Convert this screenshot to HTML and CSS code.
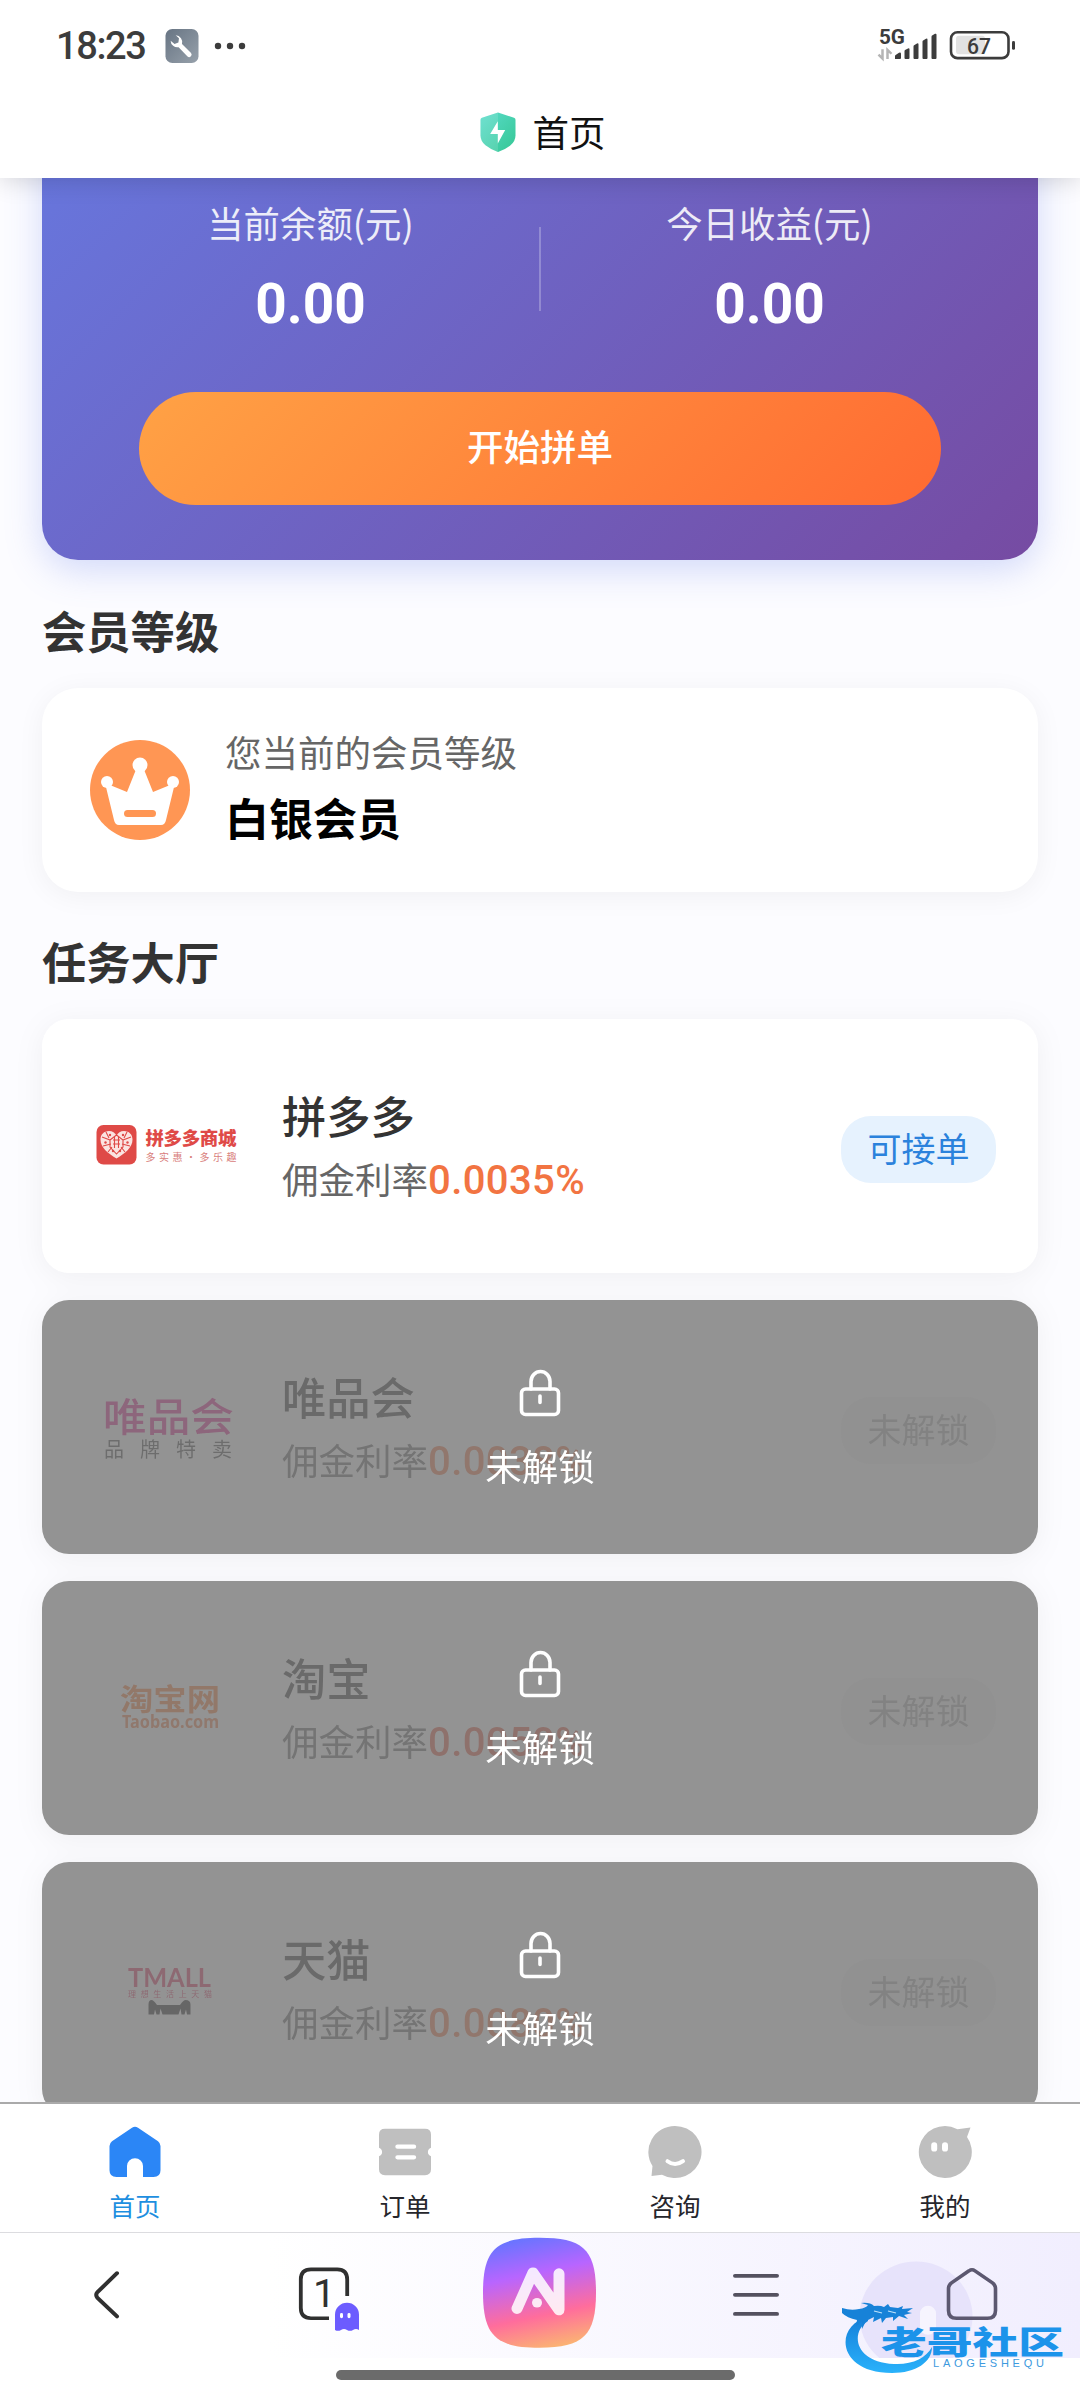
FILE: index.html
```html
<!DOCTYPE html>
<html lang="zh-CN">
<head>
<meta charset="utf-8">
<title>首页</title>
<link rel="stylesheet" href="styles.css">
</head>
<body>
<div class="screen">
  <header class="top">
    <div class="status">
      <span class="time">18:23</span>
      <svg class="tool" viewBox="0 0 34 35" width="34" height="34">
        <defs><linearGradient id="tg" x1="0" y1="0" x2="1" y2="1"><stop offset="0" stop-color="#677483"/><stop offset="1" stop-color="#97a1ab"/></linearGradient></defs>
        <rect width="34" height="35" rx="7" fill="url(#tg)"/>
        <path d="M10.500 6.500a7 7 0 0 1 6.500 9l9.300 9.200a2.600 2.600 0 0 1-3.600 3.700l-9.200-9.700a7 7 0 0 1-8.200-6.700l4 3.400 4-1.600.6-4.200z" fill="#fff"/>
      </svg>
      <svg class="dots" viewBox="0 0 32 8" width="32" height="8"><g fill="#3c3c3c"><circle cx="4" cy="4" r="3.200"/><circle cx="16" cy="4" r="3.200"/><circle cx="28" cy="4" r="3.200"/></g></svg>
      <svg class="signal" viewBox="878 28 140 36" width="140" height="35" preserveAspectRatio="none">
        <text x="879" y="45" class="net" textLength="26" lengthAdjust="spacingAndGlyphs">5G</text>
        <path d="M882.500 51v9.500l-4-4M887.500 61v-9.500l4 4" fill="none" stroke="#b5b5b5" stroke-width="2.500"/>
        <g fill="#3c3c3c">
          <path d="M895 61v-3q0-1 1-1.500l3-2q2-.6 2 1v4.500q0 1-1 1z"/>
          <path d="M904.500 60v-7q0-1 1-1.500l2.500-1.500q1.500-.6 1.500 1v9q0 1-1 1h-3q-1 0-1-1z"/>
          <path d="M913.500 60v-12q0-1 1-1.500l2.500-1.500q1.500-.6 1.500 1v14q0 1-1 1h-3q-1 0-1-1z"/>
          <path d="M922.500 60v-17q0-1 1-1.500l2.500-1.500q1.500-.6 1.500 1v19q0 1-1 1h-3q-1 0-1-1z"/>
          <path d="M931.500 60v-22q0-1 1-1.500l2.500-1.500q1.500-.6 1.500 1v24q0 1-1 1h-3q-1 0-1-1z"/>
        </g>
        <rect x="956" y="37" width="29" height="19" rx="3" fill="#e2e2e2"/>
        <rect x="951" y="33.500" width="57.500" height="26.500" rx="6.500" fill="none" stroke="#3c3c3c" stroke-width="2.600"/>
        <rect x="1012" y="42.500" width="3" height="9" rx="1.500" fill="#3c3c3c"/>
        <text x="967" y="55.500" class="level" textLength="24" lengthAdjust="spacingAndGlyphs">67</text>
      </svg>
    </div>
    <div class="title">
      <svg viewBox="0 0 36 42" width="36" height="40.500" preserveAspectRatio="none">
        <defs><linearGradient id="sh" x1="0" y1="0" x2="1" y2="1"><stop offset="0" stop-color="#5adccb"/><stop offset="1" stop-color="#35c794"/></linearGradient></defs>
        <path d="M18 0.500 34 6q1.500.6 1.500 2v16q0 6-5 10.500Q25 39 18 41.500 11 39 5.500 34.500.5 30 .5 24V8q0-1.400 1.500-2z" fill="url(#sh)"/>
        <path d="M18 .5V41.500Q11 39 5.500 34.500.5 30 .5 24V8q0-1.400 1.500-2z" fill="#fff" opacity=".13"/>
        <path d="M17.800 9.500v9.200h7.400l-7.400 14v-10h-7.600z" fill="#fff"/>
      </svg>
      <span>首页</span>
    </div>
  </header>

  <main class="page">
    <section class="hero">
      <div class="stats">
        <div class="stat"><span class="stat-label">当前余额(元)</span><span class="stat-value">0.00</span></div>
        <i class="divider"></i>
        <div class="stat"><span class="stat-label">今日收益(元)</span><span class="stat-value">0.00</span></div>
      </div>
      <div class="start">开始拼单</div>
    </section>

    <h2 class="heading first">会员等级</h2>
    <section class="member">
      <svg viewBox="0 0 102 102" width="102" height="102">
        <circle cx="51" cy="51" r="50" fill="#ff9654"/>
        <g fill="#fff"><circle cx="51" cy="26" r="7.500"/><circle cx="18" cy="43" r="6"/><circle cx="84" cy="43" r="6"/>
        <path d="M16 44 38 53 48 28h6l10 25 22-9-9 37q-1 5-5 5H30q-4 0-5-5z"/></g>
        <rect x="35" y="71" width="32" height="7" rx="3.500" fill="#ff9654"/>
      </svg>
      <div class="member-text"><span class="member-label">您当前的会员等级</span><span class="member-name">白银会员</span></div>
    </section>

    <h2 class="heading second">任务大厅</h2>
    <section class="tasks">
      <article class="task">
        <svg class="logo" viewBox="84 1096 170 100">
          <rect x="96.500" y="1125" width="40" height="39.500" rx="7" fill="#df4a47"/>
          <path d="M116.500 1158.500c-9-5.500-16-11-16-19 0-5 3.500-8.500 8.500-8.500 3.500 0 6 2 7.500 4.500 1.500-2.500 4-4.500 7.500-4.500 5 0 8.500 3.500 8.500 8.500 0 8-7 13.500-16 19z" fill="#fbe4e1"/>
          <g fill="none" stroke="#df4a47" stroke-width="1.100"><path d="M102 1137l8 3M106 1132l3 6M131 1137l-8 3M127 1132l-3 6M103 1146l8-2M130 1146l-8-2M108 1152l4-5M125 1152l-4-5"/><path d="M110 1140l6.500-5 6.500 5v7l-6.500 7-6.500-7z"/><path d="M113 1140h7M113 1144h7M114.500 1137v11M118.500 1137v11"/></g>
          <g fill="#df4a47"><circle cx="105.500" cy="1142.500" r="1.200"/><circle cx="127.500" cy="1142.500" r="1.200"/><circle cx="110" cy="1135" r="1.200"/><circle cx="123" cy="1135" r="1.200"/><circle cx="113" cy="1151" r="1.200"/><circle cx="120" cy="1151" r="1.200"/></g>
          <text x="145.500" y="1145" class="pdd" textLength="91">拼多多商城</text>
          <text x="145.500" y="1161" class="pdd-sub" textLength="91">多实惠·多乐趣</text>
        </svg>
        <div class="info"><span class="name">拼多多</span><span class="rate">佣金利率<b>0.0035%</b></span></div>
        <span class="tag">可接单</span>
      </article>

      <article class="task locked">
        <svg class="logo" viewBox="84 1377 170 100">
          <text x="103" y="1430.500" class="vip" textLength="131" lengthAdjust="spacingAndGlyphs">唯品会</text>
          <text x="104" y="1457" class="vip-sub" textLength="128">品牌特卖</text>
        </svg>
        <div class="info"><span class="name">唯品会</span><span class="rate">佣金利率<b>0.0038%</b></span></div>
        <span class="tag">未解锁</span>
        <div class="mask"><svg viewBox="0 0 42 48" width="42" height="48"><g fill="none" stroke="#fff" stroke-width="3.600" stroke-linecap="round"><rect x="2.500" y="20" width="37" height="25.500" rx="4"/><path d="M12 20v-7.500a9.500 10 0 0 1 19 0V20M21 27v6.500"/></g></svg><span>未解锁</span></div>
      </article>

      <article class="task locked">
        <svg class="logo" viewBox="84 1658 170 100">
          <text x="120" y="1710" class="tb" textLength="100" lengthAdjust="spacingAndGlyphs">淘宝网</text>
          <text x="122" y="1727.500" class="tb-sub" textLength="97" lengthAdjust="spacingAndGlyphs">Taobao.com</text>
        </svg>
        <div class="info"><span class="name">淘宝</span><span class="rate">佣金利率<b class="red">0.0050%</b></span></div>
        <span class="tag">未解锁</span>
        <div class="mask"><svg viewBox="0 0 42 48" width="42" height="48"><g fill="none" stroke="#fff" stroke-width="3.600" stroke-linecap="round"><rect x="2.500" y="20" width="37" height="25.500" rx="4"/><path d="M12 20v-7.500a9.500 10 0 0 1 19 0V20M21 27v6.500"/></g></svg><span>未解锁</span></div>
      </article>

      <article class="task locked">
        <svg class="logo" viewBox="84 1939 170 100">
          <text x="128" y="1986.500" class="tm" textLength="83" lengthAdjust="spacingAndGlyphs">TMALL</text>
          <text x="128" y="1996.500" class="tm-sub" textLength="84">理想生活上天猫</text>
          <path d="M148.500 2014.500v-10q0-4.500 3-4.500 2 0 5.500 5h23q3.500-5 5.500-5 5 0 5 4.500v10h-3.500l-1-5-1.500 5h-3l-1-6-2 6h-16l-2-6-1 6h-3l-1.500-5-1 5z" fill="#222"/>
        </svg>
        <div class="info"><span class="name">天猫</span><span class="rate">佣金利率<b>0.0080%</b></span></div>
        <span class="tag">未解锁</span>
        <div class="mask"><svg viewBox="0 0 42 48" width="42" height="48"><g fill="none" stroke="#fff" stroke-width="3.600" stroke-linecap="round"><rect x="2.500" y="20" width="37" height="25.500" rx="4"/><path d="M12 20v-7.500a9.500 10 0 0 1 19 0V20M21 27v6.500"/></g></svg><span>未解锁</span></div>
      </article>
    </section>
  </main>

  <nav class="tabs">
    <a class="tab active"><svg viewBox="0 0 56 56" width="56" height="54" preserveAspectRatio="none"><path d="M25 2.800q3-2 6 0l20 14q2.500 2 2.500 5V47q0 7-7 7H36V42.500a8 8 0 0 0-16 0V54H9.500q-7 0-7-7V21.800q0-3 2.500-5z" fill="#2b86f6"/></svg><span>首页</span></a>
    <a class="tab"><svg viewBox="0 0 56 56" width="56" height="54" preserveAspectRatio="none"><path d="M8 4h40q6 0 6 6v13.500a5.500 5 0 0 0 0 9V46q0 6-6 6H8q-6 0-6-6V32.500a5.500 5 0 0 0 0-9V10q0-6 6-6z" fill="#bfbfbf"/><path d="M20.500 22.500h16.500M20.500 33.500h16.500" stroke="#fff" stroke-width="4.400" stroke-linecap="round"/></svg><span>订单</span></a>
    <a class="tab"><svg viewBox="0 0 56 56" width="56" height="54" preserveAspectRatio="none"><path d="M28 1a26.500 27 0 1 1-13 50.500L4.500 53l1-10.500A26.500 27 0 0 1 28 1z" fill="#bfbfbf"/><path d="M20.500 37.500q7.500 6 15.500 0" fill="none" stroke="#fff" stroke-width="4" stroke-linecap="round"/></svg><span>咨询</span></a>
    <a class="tab"><svg viewBox="0 0 56 56" width="56" height="54" preserveAspectRatio="none"><path d="M28 1q6 0 12.500 3.500L53.500 2.500l-3.500 10A26.500 27 0 1 1 28 1z" fill="#bfbfbf"/><path d="M17.200 21v3.500M28 21v3.500" stroke="#fff" stroke-width="6" stroke-linecap="round"/></svg><span>我的</span></a>
  </nav>

  <footer class="browser">
    <svg viewBox="0 2238 1080 129" width="1080" height="125" preserveAspectRatio="none">
      <defs>
        <linearGradient id="ai" x1=".4" y1="0" x2=".62" y2="1"><stop offset="0" stop-color="#6a74ff"/><stop offset=".32" stop-color="#b865ff"/><stop offset=".7" stop-color="#ff6d9c"/><stop offset="1" stop-color="#fbb373"/></linearGradient>
      </defs>
      <circle cx="916" cy="2324" r="56.500" fill="#e7e3fb"/>
      <path d="M117 2279.500 97.500 2299q-2.500 3 0 6L117 2324" fill="none" stroke="#303030" stroke-width="4" stroke-linecap="round"/>
      <path d="M347.200 2303v-17q0-10.500-10-10.500H311q-10.200 0-10.200 10.500v29.500q0 10.500 10.200 10.500h18" fill="none" stroke="#303030" stroke-width="3.800"/>
      <text x="313" y="2314.500" class="count">1</text>
      <path d="M335 2338v-16a12 12 0 0 1 24 0v16q-3-2-6 0t-6 0-6 0-6 0z" fill="#6c5cff"/>
      <rect x="340" y="2320.500" width="3" height="5.500" rx="1.500" fill="#fff"/><rect x="347.500" y="2320.500" width="3" height="5.500" rx="1.500" fill="#fff"/>
      <path d="M539.500 2243c44 0 56.500 12.500 56.500 56.500s-12.500 57-56.500 57-56.500-13-56.500-57 12.500-56.500 56.500-56.500z" fill="url(#ai)"/>
      <path d="M517 2316 533 2279l26 38.500V2280" fill="none" stroke="#fff" stroke-opacity=".86" stroke-width="11" stroke-linecap="round" stroke-linejoin="round"/>
      <circle cx="537" cy="2310" r="5" fill="#fff" opacity=".86"/>
      <path d="M735 2282.200h42M735 2301.800h42M735 2321.500h42" stroke="#54515f" stroke-width="4" stroke-linecap="round"/>
      <rect x="920" y="2313" width="16" height="30" rx="8" fill="#f6f4fe"/>
      <path d="M969 2277q3-2.200 6 0l17.500 12.500q3 2.300 3 6V2318q0 8-8 8h-31q-8 0-8-8V2295.500q0-3.700 3-6z" fill="none" stroke="#5c5870" stroke-width="3.600"/>
    </svg>
  </footer>
  <div class="gesture"><i></i></div>

  <svg class="watermark" viewBox="836 2298 232 84" width="232" height="84">
    <defs><linearGradient id="wm" x1="0" y1="0" x2="0" y2="1"><stop offset="0" stop-color="#167fd9"/><stop offset="1" stop-color="#29b2fb"/></linearGradient></defs>
    <path d="M868 2317c-34 8-32 56 24 56 24 0 40-11 40-26-6 11-20 18-38 17-40-2-44-32-26-43z" fill="url(#wm)"/>
    <path d="M842 2308q9 3 17 1 7-1 9-4l-7-2q9-1 13 3 6-1 10 1l4-3 2 3 8 1 5-2-1 3 11-1-6 4 5 1-8 2 4 4-9-3-6 5 0-4-7 1-4 5-1-5-8 4 1-5-8 4-4 8 0-8-6 5 1-6q-10-2-15-7z" fill="#1782d8"/>
    <path d="M874 2311l8 2M888 2311l8 2" stroke="#bfe3fb" stroke-width="1.200"/>
    <text x="881" y="2353.500" class="wm" textLength="183" lengthAdjust="spacingAndGlyphs">老哥社区</text>
    <text x="933" y="2367" class="wm-sub" textLength="111">LAOGESHEQU</text>
  </svg>
</div>
</body>
</html>
```
FILE: styles.css
```css
* { box-sizing: border-box; }
body { margin: 0; font-family: "Noto Sans CJK SC", sans-serif; color: #333; background: #fff; }
.screen { position: relative; width: 1080px; height: 2400px; display: flex; flex-direction: column; overflow: hidden; background: #fff; }

.top { position: relative; z-index: 2; height: 178px; flex: none; background: #fff; box-shadow: 0 2px 24px rgba(0,0,0,.16); }
.status { height: 92px; padding: 0 62px 0 56px; display: flex; align-items: center; }
.time { width: 109px; font: 500 38px/1 Roboto, sans-serif; letter-spacing: -1.4px; color: #3c3c3c; }
.dots { margin-left: 15px; }
.signal { margin-left: auto; margin-bottom: 3px; overflow: visible; }
.net { font: 700 20px Roboto, sans-serif; fill: #3c3c3c; }
.level { font: 500 23px Roboto, sans-serif; fill: #3c3c3c; }
.title { height: 80px; display: flex; align-items: center; justify-content: center; gap: 17px; font-size: 36.5px; line-height: 48px; color: #111; padding-left: 5px; }

.page { height: 1924px; flex: none; padding: 0 42px; overflow: hidden; background: #fcfcff; }
.hero { height: 532px; margin-top: -150px; padding: 170px 40px 0; border-radius: 36px; background: linear-gradient(135deg, #667ae2, #764ba2); box-shadow: 0 10px 36px rgba(102,126,234,.28); color: #fff; }
.stats { display: flex; }
.stat { flex: 1; display: flex; flex-direction: column; align-items: center; gap: 28px; }
.stat-label { font-size: 36.4px; line-height: 48px; opacity: .88; }
.stat-value { font: 700 55px/60px Roboto, sans-serif; }
.divider { width: 2px; height: 84px; margin-top: 29px; background: rgba(255,255,255,.25); }
.start { width: 802px; height: 113px; margin: 58px auto 0; border-radius: 57px; background: linear-gradient(135deg, #ffa245, #ff6a32); display: flex; align-items: center; justify-content: center; font-size: 36.5px; font-weight: 500; padding-bottom: 6px; }

.heading { margin: 0; font-size: 44.3px; line-height: 50px; font-weight: 700; color: #333; }
.first { padding-top: 45px; margin-bottom: 32.500px; }
.second { padding-top: 44.500px; margin-bottom: 32.500px; }
.member { height: 204px; padding: 0 47px; display: flex; align-items: center; gap: 34px; border-radius: 36px; background: #fff; box-shadow: 0 4px 28px rgba(0,0,0,.05); }
.member-text { display: flex; flex-direction: column; gap: 14px; margin-top: -9px; }
.member-label { font-size: 36.5px; line-height: 50px; color: #666; }
.member-name { font-size: 44px; line-height: 52px; font-weight: 700; color: #000; }

.tasks { display: flex; flex-direction: column; gap: 27px; filter: drop-shadow(0 4px 14px rgba(0,0,0,.05)); }
.task { position: relative; flex: none; height: 254px; padding: 0 42px; display: flex; align-items: center; border-radius: 27px; overflow: hidden; background: #fff; }
.logo { width: 170px; height: 100px; flex: none; }
.info { margin-left: 28px; display: flex; flex-direction: column; gap: 12px; padding-top: 4px; }
.name { font-size: 44.3px; line-height: 50px; font-weight: 500; color: #333; }
.rate { font-size: 36.5px; line-height: 50px; color: #666; display: flex; align-items: center; }
.rate b { font: 500 40px/50px Roboto, sans-serif; letter-spacing: .4px; padding-top: 4px; color: #f27442; }
.rate b.red { color: #e6553c; }
.tag { margin-left: auto; width: 155px; height: 67px; margin-top: 7px; display: flex; align-items: center; justify-content: center; border-radius: 30px; background: #e6f2fe; color: #2b82dc; font-size: 34px; padding-bottom: 3px; }
.locked .tag { background: #f5f5f5; color: #aaa; }
.mask { position: absolute; inset: 0; padding-top: 69px; display: flex; flex-direction: column; align-items: center; gap: 24px; background: rgba(120,120,120,.8); color: #fff; font-size: 36.5px; line-height: 50px; }

.pdd { font-size: 18.500px; font-weight: 900; fill: #df4a47; }
.pdd-sub { font-size: 10px; fill: #d9807c; }
.vip { font-size: 39px; font-weight: 500; fill: #e0208c; }
.vip-sub { font-size: 20px; fill: #444; }
.tb { font-size: 30px; font-weight: 700; fill: #f97a30; }
.tb-sub { font: 700 17px "Noto Sans", sans-serif; fill: #f07840; }
.tm { font: 700 26px Lato, sans-serif; fill: #e0305c; }
.tm-sub { font-size: 8px; fill: #e0305c; }

.tabs { height: 131px; flex: none; display: flex; border-top: 2px solid #aaa; border-bottom: 1px solid #dcdce0; background: #fff; }
.tab { flex: 1; display: flex; flex-direction: column; align-items: center; padding-top: 21px; gap: 9px; font-size: 25.500px; line-height: 34px; color: #26262c; }
.active { color: #1e8fe0; }
.browser { height: 125px; flex: none; background: linear-gradient(90deg, #fff 25%, #f1eefe); }
.browser svg { display: block; }
.count { font: 400 40px Roboto, sans-serif; fill: #303030; }
.gesture { flex: 1; padding: 12px 9px 0 0; }
.gesture i { display: block; width: 399px; height: 10px; margin: 0 auto; border-radius: 5px; background: #6b6b6b; }
.watermark { position: absolute; left: 836px; top: 2298px; }
.wm { font-size: 32px; font-weight: 900; fill: #1c93ea; }
.wm-sub { font: 400 11px "Liberation Sans", sans-serif; fill: #3d9ade; }
```
